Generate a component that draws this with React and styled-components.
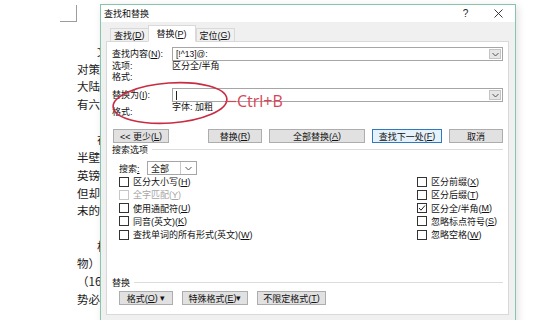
import styled, { createGlobalStyle } from 'styled-components';

const GlobalStyle = createGlobalStyle`
  html, body {
    margin: 0;
    padding: 0;
    background: #fff;
  }
  body {
    width: 555px;
    height: 320px;
    overflow: hidden;
    font-family: "Noto Sans CJK SC", sans-serif;
  }
`;

const Page = styled.div`
  position: relative;
  width: 555px;
  height: 320px;
  overflow: hidden;
  background: #fff;
`;

// Word document behind the dialog (only its left margin shows)
const Document = styled.div`
  width: 100px;
  height: 320px;
  box-sizing: border-box;
  overflow: hidden;
  padding: 5px 0 0 60px;
  font-family: "Noto Sans CJK SC", sans-serif;
  font-size: 11.5px;
  line-height: 17.7px;
  color: #1b1b1b;
`;

const CornerMark = styled.div`
  width: 16px;
  height: 16px;
  border-right: 1px solid #9c9c9c;
  border-bottom: 1px solid #9c9c9c;
  margin-bottom: 21px;
`;

const Paragraph = styled.div`
  margin: 0 0 17.7px 17px;
`;

const DocLine = styled.div`
  height: 17.7px;
  padding-left: ${({ $indent }) => ($indent ? '20px' : '0')};
  white-space: nowrap;
  overflow: hidden;
`;

// Dialog
const Dialog = styled.div`
  position: absolute;
  left: 100px;
  top: 4px;
  width: 416px;
  height: 330px;
  box-sizing: border-box;
  border: 1px solid #86c5ab;
  background: #f0f0f0;
  box-shadow: 2px 2px 8px rgba(0, 0, 0, 0.12);
  font-family: "Liberation Sans", "Noto Sans CJK SC", sans-serif;
  font-size: 9px;
  color: #111;
  display: flex;
  flex-direction: column;
`;

const TitleBar = styled.div`
  height: 17px;
  background: #fff;
  display: flex;
  align-items: center;
  padding-left: 3px;
`;

const Title = styled.div`
  flex: 1;
  font-size: 9px;
`;

const TitleButton = styled.div`
  width: 33px;
  height: 17px;
  display: flex;
  align-items: center;
  justify-content: center;
  font-size: 10px;
  color: #222;
`;

const TabBar = styled.div`
  height: 20px;
  display: flex;
  align-items: flex-end;
  padding-left: 9px;
  margin-bottom: -1px;
  position: relative;
  z-index: 1;
`;

const Tab = styled.div`
  height: ${({ $active }) => ($active ? '17px' : '14px')};
  padding: 0 ${({ $active }) => ($active ? '8px' : '3px')};
  box-sizing: border-box;
  display: flex;
  align-items: center;
  border: 1px solid #d9d9d9;
  border-bottom: ${({ $active }) => ($active ? '1px solid #fff' : '1px solid #d9d9d9')};
  background: ${({ $active }) => ($active ? '#fff' : '#f0f0f0')};
  ${({ $active }) => !$active && 'border-right: none;'}
  &:last-child {
    border-right: 1px solid #d9d9d9;
  }
`;

const Panel = styled.div`
  margin: 0 6px 0 5px;
  background: #fff;
  border: 1px solid #d9d9d9;
  padding: 5px 5px 9px 5px;
  display: flex;
  flex-direction: column;
`;

const FieldRow = styled.div`
  display: grid;
  grid-template-columns: 60px 1fr;
  align-items: center;
  height: ${({ $h }) => $h || 11}px;
  margin-top: ${({ $mt }) => $mt || 0}px;
  line-height: 11px;
`;

const FormatRow = styled.div`
  display: grid;
  grid-template-columns: 60px 1fr;
  height: 16px;
  line-height: 11px;
`;

const FormatLabel = styled.div`
  align-self: end;
`;

const FormatValue = styled.div`
  align-self: start;
`;

const Combo = styled.div`
  height: 14px;
  box-sizing: border-box;
  border: 1px solid #a6a6a6;
  display: flex;
  align-items: center;
  padding-left: 3px;
  font-size: 8.5px;
`;

const ComboText = styled.div`
  flex: 1;
`;

const Caret = styled.div`
  width: 1px;
  height: 9px;
  background: #222;
`;

const DropButton = styled.div`
  width: 12px;
  height: 10px;
  box-sizing: border-box;
  margin-right: 1px;
  background: #e6e6e6;
  border: 1px solid #c4c4c4;
  display: flex;
  align-items: center;
  justify-content: center;
`;

const ButtonRow = styled.div`
  display: flex;
  align-items: center;
  margin-top: 11px;
  padding-left: 1px;
  height: 14px;
`;

const ButtonGroup = styled.div`
  display: flex;
  gap: 7px;
  margin-left: auto;
`;

const Button = styled.div`
  width: ${({ $w }) => $w}px;
  flex-shrink: 0;
  height: 14px;
  box-sizing: border-box;
  display: flex;
  align-items: center;
  justify-content: center;
  background: ${({ $focus }) => ($focus ? '#e5f1fb' : '#e1e1e1')};
  border: 1px solid ${({ $focus }) => ($focus ? '#2f79c0' : '#adadad')};
  white-space: nowrap;
`;

const GroupHeader = styled.div`
  display: flex;
  align-items: center;
  height: 12px;
  margin-top: ${({ $mt }) => $mt || 0}px;
  &::after {
    content: "";
    flex: 1;
    height: 1px;
    background: #dcdcdc;
    margin-left: 4px;
  }
`;

const SearchRow = styled.div`
  display: flex;
  align-items: center;
  margin-top: 6px;
  padding-left: 7px;
  height: 14px;
`;

const SearchLabel = styled.div`
  width: 28px;
`;

const Select = styled.div`
  width: 50px;
  height: 14px;
  box-sizing: border-box;
  border: 1px solid #a6a6a6;
  display: flex;
  align-items: stretch;
`;

const SelectValue = styled.div`
  flex: 1;
  display: flex;
  align-items: center;
  padding-left: 3px;
`;

const SelectArrow = styled.div`
  width: 15px;
  border-left: 1px solid #c8c8c8;
  display: flex;
  align-items: center;
  justify-content: center;
`;

const Options = styled.div`
  display: flex;
  justify-content: space-between;
`;

const OptionColumn = styled.div`
  width: ${({ $w }) => ($w ? `${$w}px` : 'auto')};
  padding-left: ${({ $pl }) => $pl || 0}px;
  display: flex;
  flex-direction: column;
`;

const Check = styled.div`
  height: 13.25px;
  display: flex;
  align-items: center;
  color: ${({ $disabled }) => ($disabled ? '#a6a6a6' : '#111')};
  white-space: nowrap;
`;

const Box = styled.div`
  width: 10px;
  height: 10px;
  box-sizing: border-box;
  border: 1px solid ${({ $disabled }) => ($disabled ? '#c6c6c6' : '#333')};
  background: #fff;
  margin-right: 4px;
  display: flex;
  align-items: center;
  justify-content: center;
`;

const BottomButtons = styled.div`
  display: flex;
  gap: 9px;
  margin-top: 3px;
  padding-left: 7px;
`;

// Annotation drawn over the screenshot
const Annotation = styled.svg`
  position: absolute;
  left: 0;
  top: 0;
  pointer-events: none;
`;

const Shortcut = styled.div`
  position: absolute;
  left: 237px;
  top: 93px;
  font-family: "Open Sans", sans-serif;
  font-size: 16px;
  line-height: 16px;
  color: #d64556;
`;

const Chevron = () => (
  <svg width="7" height="5" viewBox="0 0 7 5">
    <polyline points="0.5,1 3.5,4 6.5,1" fill="none" stroke="#555" strokeWidth="1" />
  </svg>
);

const Tick = () => (
  <svg width="8" height="8" viewBox="0 0 8 8">
    <polyline points="1,4 3,6.2 7,1.5" fill="none" stroke="#222" strokeWidth="1" />
  </svg>
);

const Key = ({ children }) => <u>{children}</u>;

const paragraphs = [
  ['文', '对策', '大陆', '有六'],
  ['在', '半壁', '英镑', '但却', '末的'],
  ['根', '物）', '（16', '势必'],
];

const leftOptions = [
  { label: '区分大小写', key: 'H' },
  { label: '全字匹配', key: 'Y', disabled: true },
  { label: '使用通配符', key: 'U' },
  { label: '同音(英文)', key: 'K' },
  { label: '查找单词的所有形式(英文)', key: 'W' },
];

const rightOptions = [
  { label: '区分前缀', key: 'X' },
  { label: '区分后缀', key: 'T' },
  { label: '区分全/半角', key: 'M', checked: true },
  { label: '忽略标点符号', key: 'S' },
  { label: '忽略空格', key: 'W' },
];

const Option = ({ label, hotkey, checked, disabled }) => (
  <Check $disabled={disabled}>
    <Box $disabled={disabled}>{checked && <Tick />}</Box>
    {label}(<Key>{hotkey}</Key>)
  </Check>
);

export default function App() {
  return (
    <Page>
      <GlobalStyle />
      <Document>
        <CornerMark />
        {paragraphs.map((lines, i) => (
          <Paragraph key={i}>
            {lines.map((line, j) => (
              <DocLine key={j} $indent={j === 0}>
                {line}
              </DocLine>
            ))}
          </Paragraph>
        ))}
      </Document>

      <Dialog>
        <TitleBar>
          <Title>查找和替换</Title>
          <TitleButton>?</TitleButton>
          <TitleButton>
            <svg width="9" height="9" viewBox="0 0 9 9">
              <path d="M0.5 0.5 L8.5 8.5 M8.5 0.5 L0.5 8.5" stroke="#222" strokeWidth="0.9" />
            </svg>
          </TitleButton>
        </TitleBar>

        <TabBar>
          <Tab>查找(<Key>D</Key>)</Tab>
          <Tab $active>替换(<Key>P</Key>)</Tab>
          <Tab>定位(<Key>G</Key>)</Tab>
        </TabBar>

        <Panel>
          <FieldRow $h={14}>
            <div>查找内容(<Key>N</Key>):</div>
            <Combo>
              <ComboText>[!^13]@:</ComboText>
              <DropButton><Chevron /></DropButton>
            </Combo>
          </FieldRow>
          <FieldRow>
            <div>选项:</div>
            <div>区分全/半角</div>
          </FieldRow>
          <FieldRow>
            <div>格式:</div>
            <div />
          </FieldRow>
          <FieldRow $h={14} $mt={5}>
            <div>替换为(<Key>I</Key>):</div>
            <Combo>
              <ComboText><Caret /></ComboText>
              <DropButton><Chevron /></DropButton>
            </Combo>
          </FieldRow>
          <FormatRow>
            <FormatLabel>格式:</FormatLabel>
            <FormatValue>字体: 加粗</FormatValue>
          </FormatRow>

          <ButtonRow>
            <Button $w={56}>&lt;&lt; 更少(<Key>L</Key>)</Button>
            <ButtonGroup>
              <Button $w={54}>替换(<Key>R</Key>)</Button>
              <Button $w={96}>全部替换(<Key>A</Key>)</Button>
              <Button $w={70} $focus>查找下一处(<Key>F</Key>)</Button>
              <Button $w={54}>取消</Button>
            </ButtonGroup>
          </ButtonRow>

          <GroupHeader>搜索选项</GroupHeader>
          <SearchRow>
            <SearchLabel>搜索<Key>:</Key></SearchLabel>
            <Select>
              <SelectValue>全部</SelectValue>
              <SelectArrow><Chevron /></SelectArrow>
            </Select>
          </SearchRow>

          <Options>
            <OptionColumn $pl={7}>
              {leftOptions.map((o) => (
                <Option key={o.label} label={o.label} hotkey={o.key} disabled={o.disabled} />
              ))}
            </OptionColumn>
            <OptionColumn $w={86}>
              {rightOptions.map((o) => (
                <Option key={o.label} label={o.label} hotkey={o.key} checked={o.checked} />
              ))}
            </OptionColumn>
          </Options>

          <GroupHeader $mt={35}>替换</GroupHeader>
          <BottomButtons>
            <Button $w={54}>格式(<Key>O</Key>) ▾</Button>
            <Button $w={66}>特殊格式(<Key>E</Key>)▾</Button>
            <Button $w={69}>不限定格式(<Key>T</Key>)</Button>
          </BottomButtons>
        </Panel>
      </Dialog>

      <Annotation width="555" height="320" viewBox="0 0 555 320">
        <ellipse
          cx="170"
          cy="103"
          rx="57"
          ry="20"
          transform="rotate(-4 170 103)"
          fill="none"
          stroke="#c92c42"
          strokeWidth="1.6"
        />
        <line x1="225" y1="101.5" x2="236" y2="101.5" stroke="#d64556" strokeWidth="1.2" />
      </Annotation>
      <Shortcut>Ctrl+B</Shortcut>
    </Page>
  );
}
